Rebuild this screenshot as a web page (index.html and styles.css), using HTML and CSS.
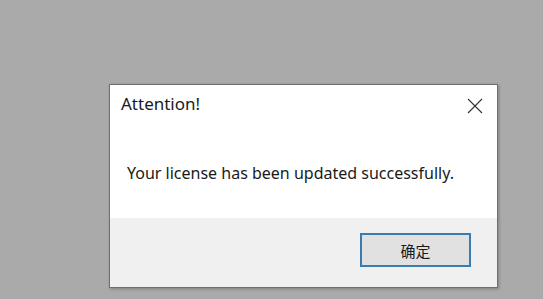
FILE: index.html
```html
<!DOCTYPE html>
<html lang="en">
<head>
    <meta charset="UTF-8">
    <meta name="viewport" content="width=device-width, initial-scale=1.0">
    <title>Attention!</title>
    <link rel="stylesheet" href="styles.css">
</head>
<body>

<div class="dialog">
    <div class="dialog-main">
        <div class="dialog-head">
            <span class="dialog-title">Attention!</span>
            <span class="dialog-close">
                <svg width="16" height="16" viewBox="0 0 16 16">
                    <path d="M1 1 L15 15 M15 1 L1 15" stroke="#333" stroke-width="1.1" fill="none"/>
                </svg>
            </span>
        </div>
        <p class="dialog-text">Your license has been updated successfully.</p>
    </div>
    <div class="dialog-foot">
        <button class="ok-btn">确定</button>
    </div>
</div>

</body>
</html>
```

FILE: styles.css
```css
body {
    margin: 0; /* Full bleed background */
    background-color: #aaaaaa; /* Gray desktop behind the dialog */
    font-family: "Noto Sans", "Noto Sans CJK SC", sans-serif;
    height: 299px;
}
.dialog {
    margin: 84px 0 0 109px; /* Place the window */
    width: 387px;
    border: 1px solid #6f6f6f;
    background-color: #ffffff;
    box-shadow: 1px 1px 3px rgba(0, 0, 0, 0.25);
}
.dialog-main {
    height: 133px; /* White message area */
}
.dialog-head {
    display: flex;
    justify-content: space-between;
    align-items: flex-start;
    padding: 7px 14px 0 11px;
}
.dialog-title {
    font-size: 17px;
    color: #1a1a1a;
}
.dialog-close {
    margin-top: 6px;
    display: flex;
}
.dialog-text {
    margin: 47px 0 0 17px;
    font-size: 16px;
    color: #1a1a1a;
}
.dialog-foot {
    height: 69px;
    background-color: #f0f0f0;
    display: flex;
    justify-content: flex-end;
    align-items: flex-start;
    padding-right: 26px;
}
.ok-btn {
    margin-top: 15px;
    width: 111px;
    height: 34px;
    border: 2px solid #3a7cb0;
    background-color: #e1e1e1;
    font-family: "Noto Sans CJK SC", sans-serif;
    font-size: 15px;
    color: #1a1a1a;
    padding: 0;
}
```
